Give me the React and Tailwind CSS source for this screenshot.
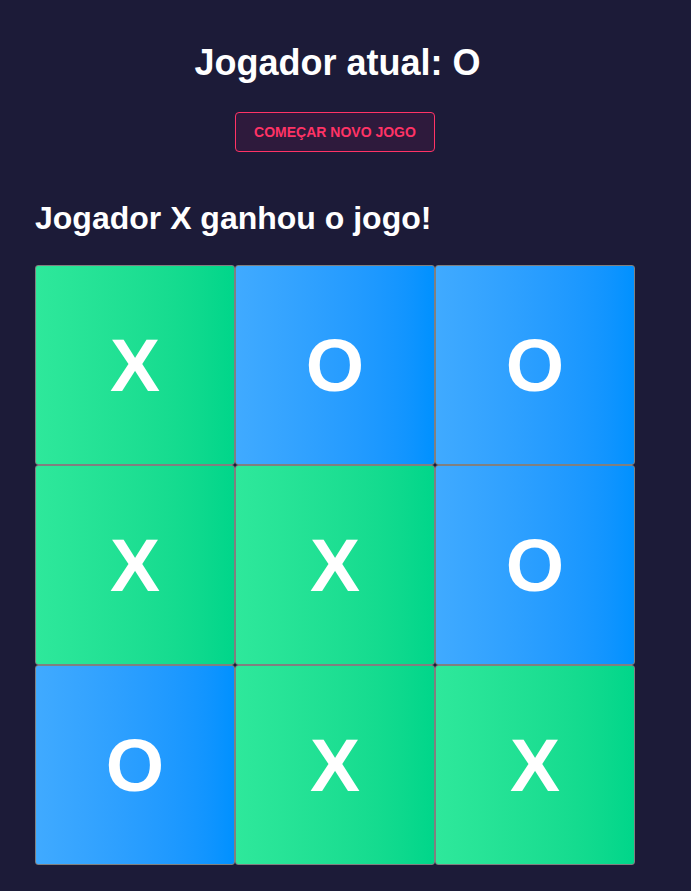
import React, { useState } from 'react';

const initialBoard = ['X', 'O', 'O', 'X', 'X', 'O', 'O', 'X', 'X'];

function Square({ value, onClick }) {
    const isX = value === 'X';
    return (
        <button
            onClick={onClick}
            className={`w-[200px] h-[200px] flex items-center justify-center border border-[#808080] rounded-[3px] text-white font-bold text-[75px] leading-none ${isX ? 'bg-linear-to-r from-[#2ee89b] to-[#00d68a]' : 'bg-linear-to-r from-[#40aaff] to-[#0091ff]'}`}>
            {value}
        </button>
    );
}

function App() {
    const [board, setBoard] = useState(initialBoard);
    const [current, setCurrent] = useState('O');
    const [winner, setWinner] = useState('X');

    const resetGame = () => {
        setBoard(Array(9).fill(null));
        setCurrent('X');
        setWinner(null);
    };

    return (
        <div className="min-h-screen bg-[#1c1b38] font-['Liberation_Sans',Arial,sans-serif] text-white">
            <div className="w-[600px] ml-[35px] pt-[43px] flex flex-col">
                <h1 className="text-center pl-[5px] text-[36px] leading-[40px] font-bold">
                    Jogador atual: {current}
                </h1>
                <div className="flex justify-center mt-[29px]">
                    <button
                        onClick={resetGame}
                        className="w-[200px] h-[40px] rounded-[4px] border border-[#ff3366] bg-[#2e1a3c] text-[#ff3366] text-[14px] font-bold uppercase">
                        Começar novo jogo
                    </button>
                </div>
                <h2 className="mt-[48px] text-[32px] leading-[36px] font-bold">
                    {winner ? `Jogador ${winner} ganhou o jogo!` : ''}
                </h2>
                <div className="mt-[29px] grid grid-cols-[repeat(3,200px)]">
                    {board.map((value, i) => (
                        <Square key={i} value={value} onClick={() => { }} />
                    ))}
                </div>
            </div>
        </div>
    );
}

export default App;
